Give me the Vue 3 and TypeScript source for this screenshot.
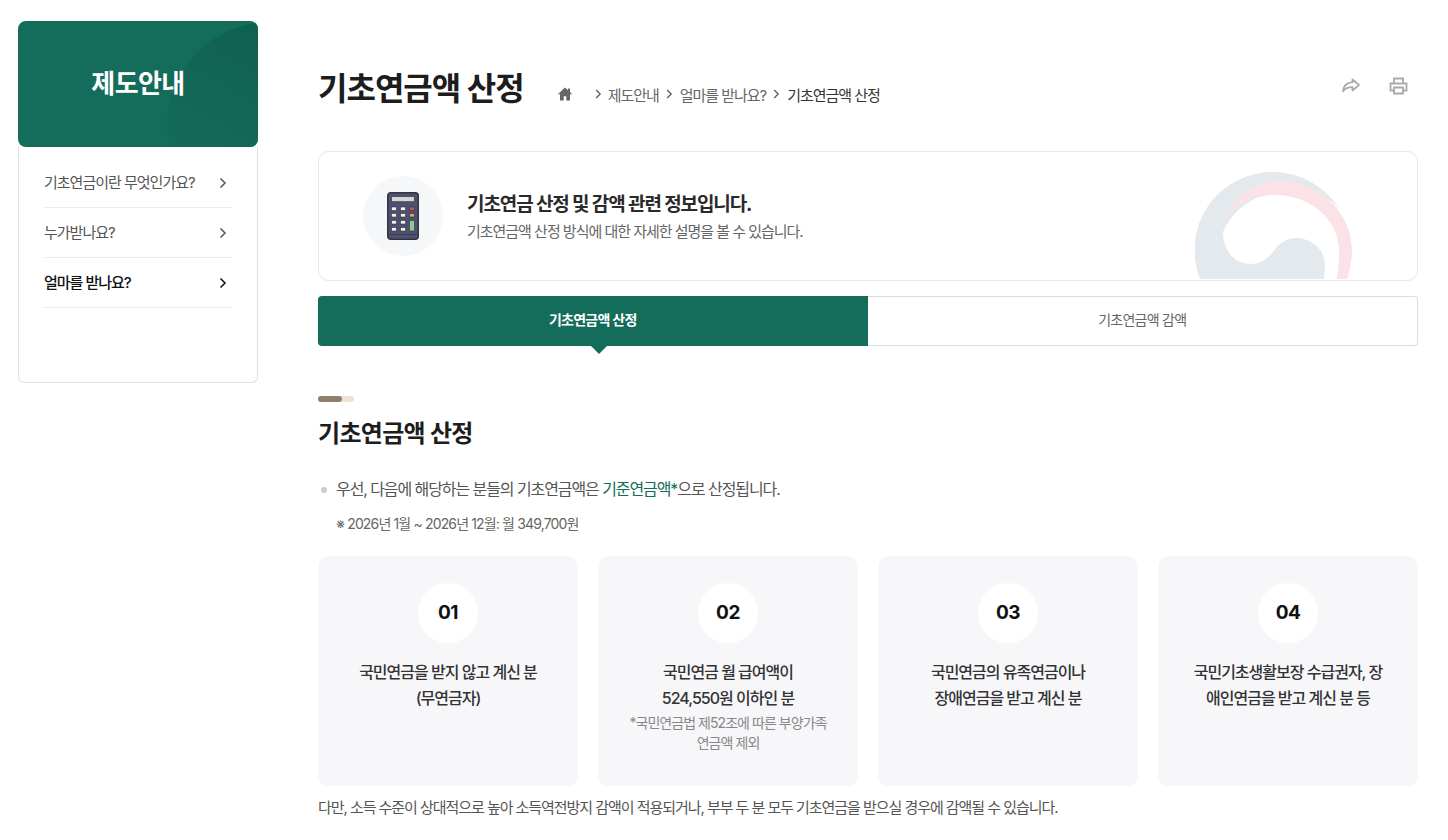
<script setup lang="ts">
interface Card { no: string; lines: string[]; note?: string[] }
const menu = [
  { label: '기초연금이란 무엇인가요?', active: false },
  { label: '누가받나요?', active: false },
  { label: '얼마를 받나요?', active: true },
]
const cards: Card[] = [
  { no: '01', lines: ['국민연금을 받지 않고 계신 분', '(무연금자)'] },
  { no: '02', lines: ['국민연금 월 급여액이', '524,550원 이하인 분'], note: ['*국민연금법 제52조에 따른 부양가족', '연금액 제외'] },
  { no: '03', lines: ['국민연금의 유족연금이나', '장애연금을 받고 계신 분'] },
  { no: '04', lines: ['국민기초생활보장 수급권자, 장', '애인연금을 받고 계신 분 등'] },
]
</script>

<template>
  <div class="page">
    <aside class="side">
      <div class="side-head">
        <svg class="side-arc" width="240" height="126" viewBox="0 0 240 126">
          <defs>
            <linearGradient id="arcFade" x1=".75" y1="0" x2=".25" y2=".85">
              <stop offset="0" stop-color="#0f5f4d" />
              <stop offset="1" stop-color="#146c5b" />
            </linearGradient>
          </defs>
          <circle cx="252" cy="104" r="103" fill="url(#arcFade)" />
        </svg>
        <h2>제도안내</h2>
      </div>
      <ul class="side-menu">
        <li v-for="m in menu" :key="m.label" :class="{ active: m.active }">
          <span>{{ m.label }}</span>
          <svg width="8" height="12" viewBox="0 0 8 12"><path d="M1.500 1.500 6 6l-4.500 4.500" fill="none" stroke="currentColor" stroke-width="1.500" /></svg>
        </li>
      </ul>
    </aside>

    <main class="main">
      <header class="top">
        <h1>기초연금액 산정</h1>
        <nav class="crumbs">
          <svg class="home" width="16" height="14" viewBox="0 0 16 14"><path d="M8 .5 .8 7.200h2.200V13.500h3.700V9.300h2.600v4.200H13V7.200h2.200L13 5.100V1.500h-2v1.700z" fill="#666" /></svg>
          <svg class="sep first" width="7" height="10" viewBox="0 0 7 10"><path d="M1.200 1 5.200 5l-4 4" fill="none" stroke="#555" stroke-width="1.200" /></svg>
          <span>제도안내</span>
          <svg class="sep" width="7" height="10" viewBox="0 0 7 10"><path d="M1.200 1 5.200 5l-4 4" fill="none" stroke="#555" stroke-width="1.200" /></svg>
          <span>얼마를 받나요?</span>
          <svg class="sep" width="7" height="10" viewBox="0 0 7 10"><path d="M1.200 1 5.200 5l-4 4" fill="none" stroke="#555" stroke-width="1.200" /></svg>
          <span class="cur">기초연금액 산정</span>
        </nav>
        <div class="tools">
          <svg width="20" height="18" viewBox="0 0 20 18"><path d="M11.500 2.500 18 8l-6.500 5.500v-3.300c-4 0-7 .8-9.500 4 .5-5 3.500-8.500 9.500-9z" fill="none" stroke="#aaa" stroke-width="1.800" stroke-linejoin="round" /></svg>
          <svg width="19" height="18" viewBox="0 0 19 18"><path d="M5 6V1.500h9V6M5 13.500H1.500V6.500h16v7H14M5 10.500h9v6H5z" fill="none" stroke="#aaa" stroke-width="1.800" /></svg>
        </div>
      </header>

      <section class="banner">
        <div class="icon-wrap">
          <svg width="32" height="48" viewBox="0 0 32 48">
            <rect x=".7" y=".7" width="30.600" height="46.600" rx="3" fill="#4e5070" stroke="#33343f" stroke-width="1.400" />
            <path d="M1 42.500h30" stroke="#3b3c52" stroke-width="1" />
            <rect x="4.700" y="4.700" width="22.500" height="5" fill="#d6d6d6" stroke="#33343f" stroke-width=".6" />
            <g fill="#f2f2f2" stroke="#33343f" stroke-width=".6">
              <rect x="4.500" y="15" width="5" height="3.500" /><rect x="13.500" y="15" width="5" height="3.500" />
              <rect x="4.500" y="21.500" width="5" height="3.500" /><rect x="13.500" y="21.500" width="5" height="3.500" />
              <rect x="4.500" y="28.500" width="5" height="3.500" /><rect x="13.500" y="28.500" width="5" height="3.500" />
              <rect x="4.500" y="35.500" width="5" height="3.500" /><rect x="13.500" y="35.500" width="5" height="3.500" />
            </g>
            <g stroke="#33343f" stroke-width=".6">
              <rect x="22.500" y="15" width="5" height="3.500" fill="#c9574f" />
              <rect x="22.500" y="21.500" width="5" height="3.500" fill="#d8a070" />
              <rect x="22.500" y="28.500" width="5" height="10.500" fill="#8ec98f" />
            </g>
          </svg>
        </div>
        <div class="banner-text">
          <strong>기초연금 산정 및 감액 관련 정보입니다.</strong>
          <p>기초연금액 산정 방식에 대한 자세한 설명을 볼 수 있습니다.</p>
        </div>
        <svg class="mark" width="160" height="108" viewBox="0 0 160 108">
          <path d="M5 108A78 78 0 0 1 78 1A78 78 0 0 1 145 39C125 10 50 10 28 61C28 80 40 93 55 93C66 93 72 88 78 81C84 72 92 67 101 67C118 67 130 80 130 94L129 108Z" fill="#e4e9ed" />
          <path d="M28 61C34 30 55 10 84 10C125 10 157 42 157 80C157 90 155 99 152 108L142 108C143 100 144 90 144 80C144 48 115 24 80 24C50 24 30 42 28 61Z" fill="#fbe2e7" />
        </svg>
      </section>

      <div class="tabs">
        <div class="tab on">기초연금액 산정</div>
        <div class="tab">기초연금액 감액</div>
      </div>

      <div class="deco"><i></i></div>
      <h3>기초연금액 산정</h3>
      <p class="bullet">우선, 다음에 해당하는 분들의 기초연금액은 <em>기준연금액*</em>으로 산정됩니다.</p>
      <p class="sub">※ 2026년 1월 ~ 2026년 12월: 월 349,700원</p>

      <div class="cards">
        <div v-for="c in cards" :key="c.no" class="card">
          <div class="num">{{ c.no }}</div>
          <p class="body"><span v-for="l in c.lines" :key="l">{{ l }}</span></p>
          <p v-if="c.note" class="note"><span v-for="l in c.note" :key="l">{{ l }}</span></p>
        </div>
      </div>
      <p class="foot">다만, 소득 수준이 상대적으로 높아 소득역전방지 감액이 적용되거나, 부부 두 분 모두 기초연금을 받으실 경우에 감액될 수 있습니다.</p>
    </main>
  </div>
</template>

<style>
html, body { margin: 0; background: #fff; overflow: hidden; }
</style>

<style scoped>
.page {
  display: flex;
  align-items: flex-start;
  height: 840px;
  overflow: hidden;
  padding: 21px 30px 0 18px;
  box-sizing: border-box;
  gap: 60px;
  font-family: Inter, "Noto Sans CJK KR", sans-serif;
  color: #222;
}
h1, h2, h3, p, ul { margin: 0; padding: 0; }
.side { width: 240px; flex: none; }
.side-head {
  position: relative;
  height: 126px;
  background: #146c5b;
  border-radius: 8px;
  overflow: hidden;
  display: flex;
  align-items: center;
  justify-content: center;
}
.side-arc { position: absolute; top: 0; left: 0; }
.side-head h2 { position: relative; color: #fff; font-size: 26px; font-weight: 700; letter-spacing: -.6px; padding-bottom: 6px; }
.side-menu {
  list-style: none;
  height: 236px;
  box-sizing: border-box;
  padding: 11px 25px 0;
  border: 1px solid #e0e0e0;
  border-top: 0;
  border-radius: 0 0 6px 6px;
}
.side-menu li {
  height: 50px;
  box-sizing: border-box;
  border-bottom: 1px solid #ececec;
  display: flex;
  align-items: center;
  justify-content: space-between;
  padding-right: 5px;
  font-size: 15px;
  letter-spacing: -1px;
  color: #555;
}
.side-menu li span { margin-bottom: 2px; }
.side-menu li.active { color: #111; font-weight: 500; }
.main { width: 1100px; flex: none; }
.top { display: flex; align-items: center; height: 130px; box-sizing: border-box; }
.top h1 { font-size: 32px; font-weight: 700; letter-spacing: -1px; color: #1d1d1d; white-space: nowrap; }
.crumbs { display: flex; align-items: center; margin: 16px 0 0 33px; font-size: 15px; letter-spacing: -1.03px; color: #666; white-space: nowrap; }
.crumbs .home { margin-right: 22px; }
.crumbs .sep { margin: 0 7px; }
.crumbs .sep.first { margin-left: 0; margin-right: 6px; }
.crumbs .cur { color: #333; }
.tools { margin-left: auto; display: flex; gap: 28px; padding-right: 10px; }
.banner {
  position: relative;
  height: 130px;
  box-sizing: border-box;
  border: 1px solid #e9e9e9;
  border-radius: 10px;
  display: flex;
  align-items: center;
  padding-left: 44px;
  overflow: hidden;
}
.icon-wrap { width: 80px; height: 80px; border-radius: 50%; background: #f6f7f9; display: flex; align-items: center; justify-content: center; flex: none; }
.banner-text { margin-left: 24px; padding-top: 3px; }
.banner-text strong { display: block; font-size: 19px; font-weight: 700; letter-spacing: -1.1px; color: #2a2a2a; line-height: 26px; }
.banner-text p { font-size: 15px; letter-spacing: -1.02px; color: #666; line-height: 22px; margin-top: 3px; }
.mark { position: absolute; left: 876px; top: 19px; }
.tabs { display: flex; margin-top: 15px; height: 50px; }
.tab {
  flex: 1;
  display: flex;
  align-items: center;
  justify-content: center;
  box-sizing: border-box;
  padding-bottom: 4px;
  border: 1px solid #dcdcdc;
  border-left: 0;
  border-radius: 0 4px 4px 0;
  font-size: 14px;
  letter-spacing: -.75px;
  color: #666;
}
.tab.on {
  position: relative;
  background: #146c5b;
  border: 0;
  border-radius: 4px 0 0 4px;
  color: #fff;
  font-weight: 600;
}
.tab.on::after {
  content: "";
  position: absolute;
  left: 50%;
  bottom: -8px;
  margin-left: -2px;
  border: 8px solid transparent;
  border-bottom: 0;
  border-top-color: #146c5b;
}
.deco { margin-top: 50px; width: 36px; height: 6px; border-radius: 3px; background: #ebe3d9; }
.deco i { display: block; width: 24px; height: 6px; border-radius: 3px; background: #8d7f68; }
h3 { margin-top: 14px; font-size: 24px; font-weight: 700; letter-spacing: -.7px; color: #1d1d1d; line-height: 36px; }
.bullet { position: relative; margin-top: 25px; padding-left: 18px; font-size: 16px; letter-spacing: -1.08px; line-height: 24px; color: #555; }
.bullet::before { content: ""; position: absolute; left: 3px; top: 10px; width: 6px; height: 6px; border-radius: 50%; background: #ccc; }
.bullet em { font-style: normal; color: #146c5b; }
.sub { margin-top: 12px; padding-left: 18px; font-size: 14px; letter-spacing: -.85px; line-height: 22px; color: #666; }
.cards { display: grid; grid-template-columns: repeat(4, 1fr); gap: 20px; margin-top: 21px; }
.card { height: 230px; box-sizing: border-box; background: #f7f7fa; border-radius: 10px; padding-top: 27px; display: flex; flex-direction: column; align-items: center; text-align: center; }
.num { width: 60px; height: 60px; box-sizing: border-box; padding-bottom: 2px; border-radius: 50%; background: #fff; display: flex; align-items: center; justify-content: center; font-size: 19px; font-weight: 700; color: #111; letter-spacing: -.5px; }
.body { margin-top: 16px; font-size: 16px; font-weight: 500; letter-spacing: -1px; line-height: 26px; color: #333; }
.body span, .note span { display: block; }
.note { margin-top: 2px; font-size: 14px; letter-spacing: -.95px; line-height: 20px; color: #888; }
.foot { margin-top: 10px; font-size: 15px; letter-spacing: -1.05px; line-height: 24px; color: #555; white-space: nowrap; }
</style>
